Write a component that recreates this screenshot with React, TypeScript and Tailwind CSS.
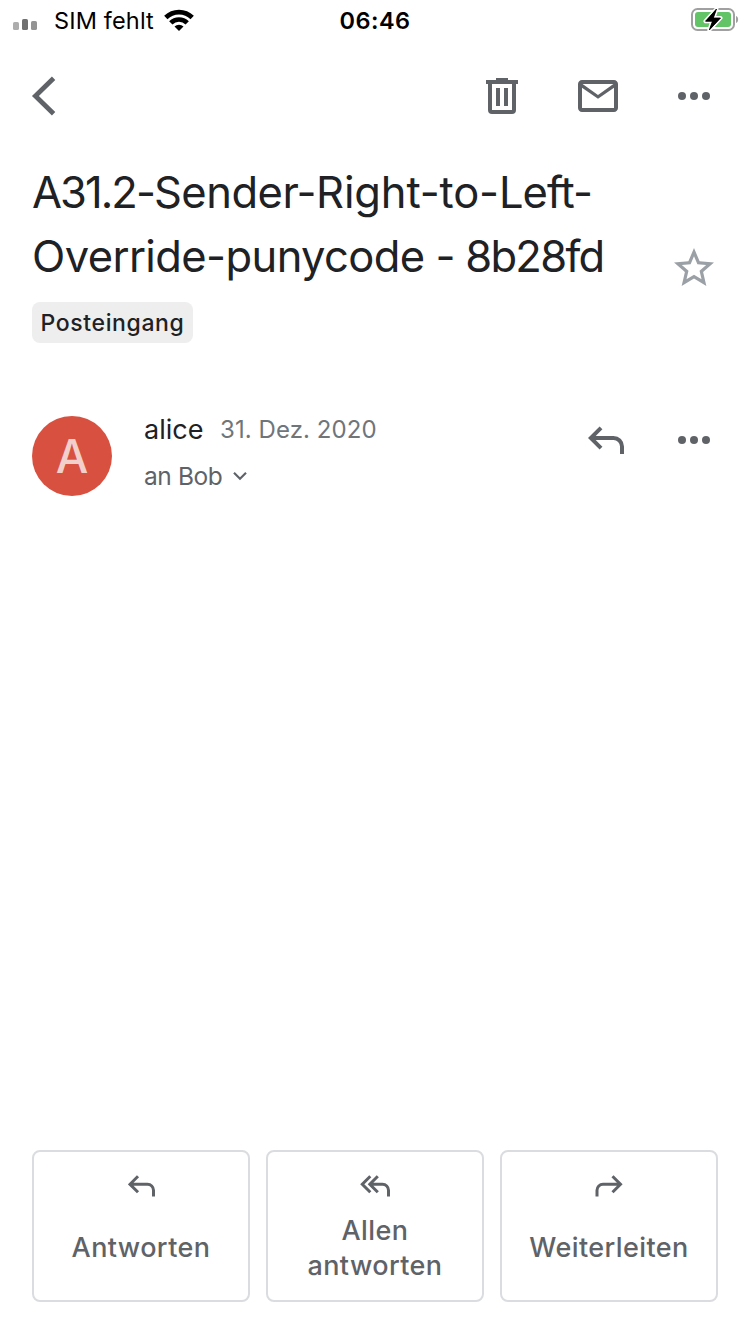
import React from "react";

function SignalIcon() {
  return (
    <svg width="24" height="12" viewBox="0 0 24 12">
      <rect x="0" y="3" width="6" height="8" rx="1.6" fill="#adadad" />
      <rect x="9" y="0" width="6" height="11" rx="1.6" fill="#707070" />
      <rect x="18" y="2" width="6" height="9" rx="1.6" fill="#949494" />
    </svg>
  );
}

function WifiIcon() {
  return (
    <svg width="30" height="23" viewBox="0 0 30 23">
      <g fill="none" stroke="#000" strokeWidth="4.700">
        <path d="M1.800 8.500a18.800 18.800 0 0 1 26.400 0" />
        <path d="M6.800 13.900a11.600 11.600 0 0 1 16.400 0" />
      </g>
      <path d="M15 22l-4.500-4.500a6.600 6.600 0 0 1 9 0z" fill="#000" />
    </svg>
  );
}

function BatteryIcon() {
  return (
    <svg width="50" height="26" viewBox="0 0 50 26">
      <rect x="2" y="2" width="42" height="21" rx="5.5" fill="none" stroke="#a0a0a0" strokeWidth="2" />
      <rect x="5" y="5" width="36" height="15" rx="3" fill="#62c466" />
      <path d="M46 9c2.800.8 2.800 6.200 0 7z" fill="#a0a0a0" />
      <path
        d="M26.500 2L15.500 14.200h7L19.300 23 30.500 11h-7.200z"
        fill="#000"
        stroke="#fff"
        strokeWidth="4"
        strokeLinejoin="round"
        paintOrder="stroke"
      />
      <path d="M26.500 2L15.500 14.200h7L19.300 23 30.500 11h-7.200z" fill="#000" stroke="#000" strokeWidth="0.800" />
    </svg>
  );
}

function BackIcon() {
  return (
    <svg className="-ml-px" width="28" height="40" viewBox="0 0 28 40" fill="none" stroke="#5f6368" strokeWidth="4.800">
      <path d="M22.600 2.200L4.400 20l18.200 17.800" />
    </svg>
  );
}

function TrashIcon() {
  return (
    <svg width="32" height="36" viewBox="0 0 32 36" fill="#5f6368">
      <path d="M0 2h10V0h12v2h10v4h-2v26a4 4 0 0 1-4 4H6a4 4 0 0 1-4-4V6H0zM6 6v26h20V6z" fillRule="evenodd" />
      <path d="M10 10h4v18h-4zM18 10h4v18h-4z" />
    </svg>
  );
}

function MailIcon() {
  return (
    <svg width="40" height="32" viewBox="2 4 20 16" fill="#5f6368">
      <path d="M22 6c0-1.100-.9-2-2-2H4c-1.100 0-2 .9-2 2v12c0 1.100.9 2 2 2h16c1.100 0 2-.9 2-2V6zm-2.300 0L12 11.500 4.300 6h15.400zm.3 12H4V7.900l8 5.500 8-5.500v10.100z" />
    </svg>
  );
}

function MoreIcon() {
  return (
    <svg width="32" height="8" viewBox="0 0 32 8" fill="#5f6368">
      <circle cx="4" cy="4" r="4" />
      <circle cx="16" cy="4" r="4" />
      <circle cx="28" cy="4" r="4" />
    </svg>
  );
}

function StarIcon() {
  return (
    <svg width="48" height="48" viewBox="0 0 24 24" fill="#9aa0a6">
      <path d="M22 9.240l-7.190-.62L12 2 9.190 8.630 2 9.240l5.460 4.730L5.820 21 12 17.270 18.180 21l-1.630-7.030L22 9.240zM12 15.400l-3.760 2.270 1-4.280-3.320-2.880 4.380-.38L12 6.100l1.710 4.040 4.380.38-3.320 2.880 1 4.280L12 15.400z" />
    </svg>
  );
}

function ReplyLargeIcon() {
  return (
    <svg width="36" height="28" viewBox="0 0 36 28" fill="none" stroke="#5f6368" strokeWidth="4">
      <path d="M13 1.800L2.800 12 13 22.200M3 12h22.500a8.500 8.500 0 0 1 8.500 8.500V28" />
    </svg>
  );
}

function ReplyIcon() {
  return (
    <svg className="ml-px" width="28" height="22" viewBox="0 0 28 22" fill="none" stroke="#5f6368" strokeWidth="3">
      <path d="M10 1.300L2 9.300l8 8M2.500 9.300h17a6 6 0 0 1 6 6V21.500" />
    </svg>
  );
}

function ReplyAllIcon() {
  return (
    <svg className="ml-px" width="32" height="22" viewBox="0 0 32 22" fill="none" stroke="#5f6368" strokeWidth="3">
      <path d="M10.300 1.300l-8 8 8 8M17.800 1.300l-8 8 8 8M10.300 9.300h12.200a6 6 0 0 1 6 6V21.500" />
    </svg>
  );
}

function ForwardIcon() {
  return (
    <svg className="-ml-px" width="28" height="22" viewBox="0 0 28 22" fill="none" stroke="#5f6368" strokeWidth="3">
      <path d="M17.500 1.300l8 8-8 8M25 9.300H8a6 6 0 0 0-6 6V21.500" />
    </svg>
  );
}

function ActionButton({ icon, children }: { icon: React.ReactNode; children: React.ReactNode }) {
  return (
    <button className="flex h-[152px] w-[218px] flex-col items-center rounded-lg border-2 border-[#dadce0] pt-[23px] text-[#5f6368]">
      {icon}
      <span className="mt-[14px] flex h-[72px] w-[180px] items-center justify-center text-center text-[27px] leading-[35px] font-medium tracking-[0.400px]">
        {children}
      </span>
    </button>
  );
}

export default function App() {
  return (
    <div className="flex h-[1334px] w-[750px] flex-col overflow-hidden bg-white font-['Inter','Liberation_Sans',sans-serif] text-[#202124]">
      <div className="grid h-10 grid-cols-3 items-center text-black">
        <div className="flex items-center pl-[13px]">
          <div className="pt-[9px]">
            <SignalIcon />
          </div>
          <span className="ml-[17px] w-[100px] pt-0.5 text-[23.500px] leading-[38px] tracking-[0.150px] whitespace-nowrap">SIM fehlt</span>
          <div className="ml-[10px]">
            <WifiIcon />
          </div>
        </div>
        <span className="pt-0.5 text-center text-[23.500px] leading-[38px] font-semibold tracking-[0.5px]">06:46</span>
        <div className="flex justify-end pr-[10px]">
          <BatteryIcon />
        </div>
      </div>

      <div className="flex h-28 items-center pr-10 pl-8">
        <BackIcon />
        <div className="ml-auto flex items-center gap-[60px]">
          <TrashIcon />
          <MailIcon />
          <MoreIcon />
        </div>
      </div>

      <div className="flex items-end justify-between pt-2 pr-8 pl-8">
        <h1 className="text-[43.500px] leading-[64px] font-normal">
          <span className="block whitespace-nowrap">
            <span className="tracking-[-1.950px]">A31.2-</span>
            <span className="tracking-[-0.500px]">Sender-</span>
            <span className="tracking-[-0.150px]">Right-to-</span>
            <span className="tracking-[-1px]">Left-</span>
          </span>
          <span className="block whitespace-nowrap">
            <span className="tracking-[-0.600px]">Override-punycode</span>
            <span className="tracking-[-1.300px]"> - </span>
            <span className="tracking-[-1.700px]">8b28fd</span>
          </span>
        </h1>
        <div className="-mb-1">
          <StarIcon />
        </div>
      </div>

      <div className="mt-[14px] ml-8 flex h-[41px] w-[161px] items-center justify-center rounded-lg bg-[#eeeeee] pt-0.5 text-[23px] font-medium tracking-[0.620px] whitespace-nowrap">
        Posteingang
      </div>

      <div className="mt-[73px] flex pr-10 pl-8">
        <div className="flex size-20 items-center justify-center rounded-full bg-[#d85140] text-[46px] font-medium text-[#f3cfcb]">A</div>
        <div className="ml-8 flex flex-col">
          <div className="flex h-7 items-center">
            <span className="w-[76px] text-[27px]">alice</span>
            <span className="text-[24px] tracking-[0.080px] text-[#70757a]">31. Dez. 2020</span>
          </div>
          <div className="mt-[18px] flex h-7 items-center text-[24.500px] text-[#5f6368]">
            <span className="w-[78px] tracking-[-0.400px] whitespace-nowrap">an Bob</span>
            <svg className="ml-[11px]" width="14" height="10" viewBox="0 0 14 10" fill="none" stroke="#5f6368" strokeWidth="2.200">
              <path d="M1 1.800l6 6 6-6" />
            </svg>
          </div>
        </div>
        <div className="ml-auto flex h-12 items-center gap-[54px]">
          <ReplyLargeIcon />
          <MoreIcon />
        </div>
      </div>

      <div className="mt-auto mb-8 flex gap-4 pl-8">
        <ActionButton icon={<ReplyIcon />}>Antworten</ActionButton>
        <ActionButton icon={<ReplyAllIcon />}>
          <span className="pt-0.5">
            Allen
            <br />
            antworten
          </span>
        </ActionButton>
        <ActionButton icon={<ForwardIcon />}>Weiterleiten</ActionButton>
      </div>
    </div>
  );
}
